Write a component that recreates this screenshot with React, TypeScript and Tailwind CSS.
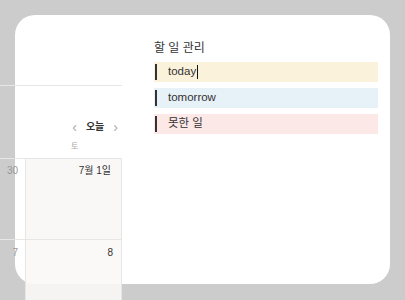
import React from "react";

const font = { fontFamily: '"Liberation Sans", "Noto Sans CJK KR", sans-serif' };

const todos = [
  { label: "today", bg: "bg-[#fbf2dc]", caret: true },
  { label: "tomorrow", bg: "bg-[#e7f1f8]", caret: false },
  { label: "못한 일", bg: "bg-[#fde8e8]", caret: false },
];

function TodoRow({ label, bg, caret }: { label: string; bg: string; caret: boolean }) {
  return (
    <div className={`flex h-[20px] items-center ${bg}`}>
      <span className="ml-[1px] h-[16px] w-[2px] bg-[#333]" />
      <span className="ml-[11px] text-[11.5px] leading-none text-[#333]">{label}</span>
      {caret && <span className="ml-[1px] h-[14px] w-[1px] bg-[#111]" />}
    </div>
  );
}

export default function App() {
  return (
    <div className="relative h-[300px] w-[405px] overflow-hidden bg-[#cccccc]" style={font}>
      {/* card */}
      <div className="absolute left-[15px] top-[15px] h-[269px] w-[375px] rounded-[20px] bg-white">
        <div className="ml-[139px] mt-[25px] w-[224px]">
          <div className="mb-[6px] text-[12px] leading-[16px] text-[#333]">할 일 관리</div>
          <div className="flex flex-col gap-[6px]">
            {todos.map((t) => (
              <TodoRow key={t.label} {...t} />
            ))}
          </div>
        </div>
      </div>

      {/* calendar fragment lying over the card */}
      <div className="absolute left-0 top-0 w-[122px]">
        <div className="h-[86px] border-b border-[#e6e6e6]" />
        <div className="mt-[34px] flex h-[14px] items-center justify-end gap-[9px] pr-[4px] text-[#333]">
          <span className="text-[14px] leading-none text-[#aaa]">‹</span>
          <span className="text-[10px] font-bold leading-none">오늘</span>
          <span className="text-[14px] leading-none text-[#aaa]">›</span>
        </div>
        <div className="h-[24px] pl-[71px] pt-[8px]">
          <span className="block text-[8px] leading-[10px] text-[#aaa]">토</span>
        </div>
        <div className="grid grid-cols-[25px_1fr] border-b border-t border-[#e6e6e6]">
          <div className="h-[80px] pr-[7px] pt-[4px] text-right text-[10px] text-[#999]">30</div>
          <div className="h-[80px] border-l border-r border-[#e6e6e6] bg-[#f9f8f6] pr-[10px] pt-[4px] text-right text-[10px] text-[#333]">
            7월 1일
          </div>
        </div>
        <div className="grid grid-cols-[25px_1fr]">
          <div className="h-[60px] pr-[7px] pt-[5px] text-right text-[10px] text-[#999]">7</div>
          <div className="h-[60px] border-l border-r border-[#e6e6e6] bg-[#f9f8f6]/90 pr-[8px] pt-[5px] text-right text-[10px] text-[#333]">
            8
          </div>
        </div>
      </div>
    </div>
  );
}
